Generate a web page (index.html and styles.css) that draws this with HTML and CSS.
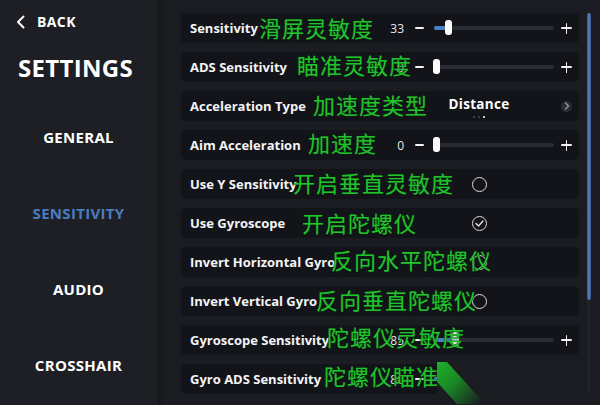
FILE: index.html
```html
<!DOCTYPE html>
<html>
<head>
<meta charset="utf-8">
<link rel="stylesheet" href="styles.css">
</head>
<body>
<div class="app">
  <aside class="sidebar">
    <div class="back">
      <svg class="back-icon" width="10" height="14" viewBox="0 0 10 14"><polyline points="7.5,1.5 2,7 7.5,12.5" fill="none" stroke="#fff" stroke-width="2" stroke-linecap="round" stroke-linejoin="round"/></svg>
      <span>BACK</span>
    </div>
    <h1 class="title">SETTINGS</h1>
    <nav class="nav">
      <div class="nav-item">GENERAL</div>
      <div class="nav-item active">SENSITIVITY</div>
      <div class="nav-item">AUDIO</div>
      <div class="nav-item">CROSSHAIR</div>
    </nav>
  </aside>
  <div class="edge"></div>
  <main class="main">
    <div class="list">
      <div class="row">
        <span class="label">Sensitivity</span>
        <div class="slider">
          <span class="val">33</span><span class="minus"></span>
          <div class="track"><div class="fill" style="width:15px"></div><div class="thumb" style="left:11px"></div></div>
          <span class="plus"></span>
        </div>
        <span class="note n1">滑屏灵敏度</span>
      </div>
      <div class="row">
        <span class="label">ADS Sensitivity</span>
        <div class="slider">
          <span class="val">0</span><span class="minus"></span>
          <div class="track"><div class="thumb" style="left:-1px"></div></div>
          <span class="plus"></span>
        </div>
        <span class="note n2">瞄准灵敏度</span>
      </div>
      <div class="row">
        <span class="label">Acceleration Type</span>
        <div class="select">
          <div class="sel-main">
            <span class="sel-text">Distance</span>
            <span class="dots"><i></i><i></i><i class="on"></i></span>
          </div>
          <span class="chev"><svg width="6" height="8" viewBox="0 0 6 8"><polyline points="1.5,1 4.5,4 1.5,7" fill="none" stroke="#9a9ca3" stroke-width="1.3" stroke-linecap="round"/></svg></span>
        </div>
        <span class="note n3">加速度类型</span>
      </div>
      <div class="row">
        <span class="label">Aim Acceleration</span>
        <div class="slider">
          <span class="val">0</span><span class="minus"></span>
          <div class="track"><div class="thumb" style="left:-1px"></div></div>
          <span class="plus"></span>
        </div>
        <span class="note n4">加速度</span>
      </div>
      <div class="row">
        <span class="label">Use Y Sensitivity</span>
        <div class="toggle"><span class="circle"></span></div>
        <span class="note n5">开启垂直灵敏度</span>
      </div>
      <div class="row">
        <span class="label">Use Gyroscope</span>
        <div class="toggle"><span class="circle"><svg width="9" height="7" viewBox="0 0 9 7"><polyline points="1,3.5 3.5,6 8,1" fill="none" stroke="#e2e2e4" stroke-width="1.4" stroke-linecap="round" stroke-linejoin="round"/></svg></span></div>
        <span class="note n6">开启陀螺仪</span>
      </div>
      <div class="row">
        <span class="label">Invert Horizontal Gyro</span>
        <div class="toggle"><span class="circle"></span></div>
        <span class="note n7">反向水平陀螺仪</span>
      </div>
      <div class="row">
        <span class="label">Invert Vertical Gyro</span>
        <div class="toggle"><span class="circle"></span></div>
        <span class="note n8">反向垂直陀螺仪</span>
      </div>
      <div class="row">
        <span class="label">Gyroscope Sensitivity</span>
        <div class="slider">
          <span class="val">85</span><span class="minus"></span>
          <div class="track"><div class="fill" style="width:22px"></div><div class="thumb" style="left:18px"></div></div>
          <span class="plus"></span>
        </div>
        <span class="note n9">陀螺仪灵敏度</span>
      </div>
      <div class="row row-cut">
        <span class="label">Gyro ADS Sensitivity</span>
        <div class="slider">
          <span class="val">80</span><span class="minus"></span>
          <div class="track"><div class="fill" style="width:20px"></div><div class="thumb" style="left:16px"></div></div>
          <span class="plus"></span>
        </div>
        <span class="note n10">陀螺仪瞄准</span>
        <span class="wedge"></span>
      </div>
    </div>
    <div class="scroll"><div class="scroll-thumb"></div></div>
  </main>
</div>
</body>
</html>
```
FILE: styles.css
```css
* { box-sizing: border-box; margin: 0; padding: 0; }
html, body { width: 600px; height: 405px; overflow: hidden; }
body {
  background: #1b1c22;
  font-family: "Open Sans", "Noto Sans", sans-serif;
  color: #fff;
}
.app { display: flex; height: 405px; }
.sidebar {
  width: 157px;
  flex: none;
  background: #1e1f24;
  padding-top: 15px;
  display: flex;
  flex-direction: column;
}
.back {
  display: flex;
  align-items: center;
  height: 14px;
  padding-left: 16px;
  font-weight: 700;
  font-size: 14px;
  line-height: 14px;
  letter-spacing: 0.4px;
}
.back-icon { margin-right: 11px; }
.title {
  margin-top: 27px;
  padding-left: 18px;
  font-size: 24px;
  line-height: 24px;
  font-weight: 700;
  letter-spacing: 0.3px;
}
.nav {
  margin-top: 50px;
  display: flex;
  flex-direction: column;
  gap: 61px;
}
.nav-item {
  text-align: center;
  font-size: 15px;
  line-height: 15px;
  font-weight: 700;
  letter-spacing: 0.3px;
}
.nav-item.active { color: #4a7cc0; }
.edge {
  width: 7px;
  flex: none;
  background: linear-gradient(to right, #16171b, #1a1b20);
}
.main {
  flex: 1;
  display: flex;
  padding: 13px 0 0 17px;
  gap: 8px;
}
.list {
  width: 398px;
  display: flex;
  flex-direction: column;
  gap: 9px;
}
.row {
  position: relative;
  height: 30px;
  border-radius: 5px;
  background: #131419;
  display: flex;
  align-items: center;
  padding-left: 9px;
}
.row-cut { width: 256px; border-radius: 5px 0 0 5px; }
.label {
  flex: 1;
  font-size: 13px;
  font-weight: 700;
  white-space: nowrap;
  color: #f4f4f6;
}
.slider {
  width: 205px;
  flex: none;
  display: flex;
  align-items: center;
  height: 30px;
}
.row-cut .slider { width: 63px; overflow: hidden; }
.val {
  width: 30px;
  flex: none;
  text-align: right;
  font-size: 12px;
  color: #e8e8ea;
}
.minus, .plus {
  position: relative;
  flex: none;
  height: 16px;
}
.minus { width: 30px; }
.plus { width: 25px; }
.minus::before, .plus::before, .plus::after {
  content: "";
  position: absolute;
  background: #f2f2f4;
  border-radius: 1px;
}
.minus::before { width: 9px; height: 1.6px; left: 11px; top: 7.2px; }
.plus::before { width: 11px; height: 1.6px; left: 7px; top: 7.2px; }
.plus::after { width: 1.6px; height: 11px; left: 11.7px; top: 2.5px; }
.track {
  position: relative;
  flex: none;
  width: 120px;
  height: 4px;
  background: #2a2c33;
  border-radius: 2px;
}
.fill {
  position: absolute;
  left: 0; top: 0;
  height: 4px;
  background: #4b7fc4;
  border-radius: 2px;
}
.thumb {
  position: absolute;
  top: -6px;
  width: 7px;
  height: 15px;
  background: #fbfbfc;
  border-radius: 3px;
}
.select {
  width: 205px;
  flex: none;
  display: flex;
  align-items: center;
  height: 30px;
}
.sel-main {
  margin-left: 30px;
  width: 150px;
  height: 30px;
  position: relative;
  display: flex;
  justify-content: center;
}
.sel-text {
  font-size: 13.5px;
  font-weight: 700;
  line-height: 14px;
  margin-top: 6px;
  letter-spacing: 0.3px;
}
.dots {
  position: absolute;
  left: 69px;
  top: 25px;
  display: flex;
  gap: 3px;
}
.dots i {
  display: block;
  width: 2px; height: 2px;
  border-radius: 1px;
  background: #4a4c55;
}
.dots i.on { background: #fff; }
.chev {
  width: 11px;
  height: 11px;
  margin-left: 7px;
  border-radius: 50%;
  background: #2a2c34;
  display: flex;
  align-items: center;
  justify-content: center;
}
.toggle {
  width: 205px;
  flex: none;
  padding-left: 98px;
  display: flex;
  align-items: center;
}
.circle {
  width: 15px;
  height: 15px;
  border: 1.5px solid #dcdcdf;
  border-radius: 50%;
  display: flex;
  align-items: center;
  justify-content: center;
}
.note {
  position: absolute;
  top: 2px;
  font-family: "Noto Sans CJK SC", sans-serif;
  font-size: 22px;
  line-height: 24px;
  letter-spacing: 1px;
  color: #22c22d;
  text-shadow: 0 0 1px #0b3d10, 0 0 1px #0b3d10;
  white-space: nowrap;
}
.n1 { left: 78px; top: 2px; }
.n2 { left: 116px; top: 0; }
.n3 { left: 132px; top: 1px; }
.n4 { left: 127px; top: 0; }
.n5 { left: 112px; top: 1px; }
.n6 { left: 121px; top: 2px; }
.n7 { left: 150px; top: 0; }
.n8 { left: 135px; top: 1px; }
.n9 { left: 146px; top: -1px; }
.n10 { left: 143px; top: -1px; }
.wedge {
  position: absolute;
  left: 256px;
  top: -2px;
  width: 48px;
  height: 42px;
  background: linear-gradient(135deg, #1fae2a 0%, #1a8a25 40%, rgba(27,28,34,0) 95%);
  clip-path: polygon(0 0, 10px 0, 48px 42px, 20px 42px, 0 20px);
}
.scroll {
  width: 4px;
  height: 381px;
  background: #202229;
  border-radius: 2px;
}
.scroll-thumb {
  height: 287px;
  border-radius: 2px;
  background: linear-gradient(to right, #34538a, #5c81bd, #34538a);
}
```
